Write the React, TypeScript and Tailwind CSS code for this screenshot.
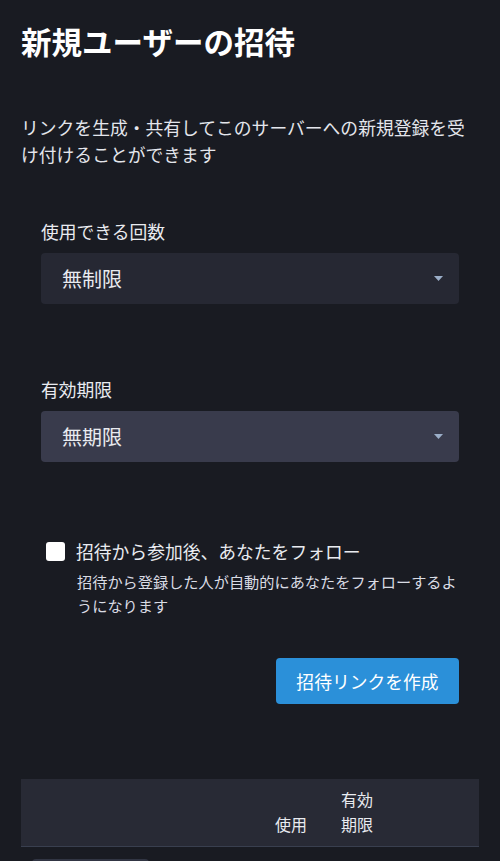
import React from "react";

const font = { fontFamily: '"Noto Sans CJK JP", "Noto Sans", sans-serif' };

function Caret() {
  return (
    <svg width="9" height="5" viewBox="0 0 9 5" className="shrink-0">
      <path d="M0 0 L9 0 L4.5 5 Z" fill="#9baec8" />
    </svg>
  );
}

function SelectField({ label, value, top, bg }: { label: string; value: string; top: string; bg: string }) {
  return (
    <div className={top}>
      <div className="text-[17.8px] leading-[26px] text-[#e9ebf0]">{label}</div>
      <div className={`mt-[9px] flex h-[51px] items-center justify-between rounded-[4px] pl-[21px] pr-[16px] ${bg}`}>
        <span className="text-[20px] text-[#e9ebf0]">{value}</span>
        <Caret />
      </div>
    </div>
  );
}

export default function App() {
  return (
    <div style={font} className="min-h-[861px] w-[500px] overflow-hidden bg-[#191b22] text-white">
      <div className="px-[21px] pt-[21px]">
        <h1 className="text-[30.5px] font-bold leading-[40px] text-white">新規ユーザーの招待</h1>
        <p className="mt-[53px] text-[17.8px] leading-[27px] text-[#e4e6ec]">
          リンクを生成・共有してこのサーバーへの新規登録を受け付けることができます
        </p>

        <div className="px-[20px]">
          <SelectField label="使用できる回数" value="無制限" top="mt-[50px]" bg="bg-[#262833]" />
          <SelectField label="有効期限" value="無期限" top="mt-[72px]" bg="bg-[#393b4c]" />

          <div className="mt-[76px] flex items-center gap-[11px] pl-[5px]">
            <span className="h-[19px] w-[19px] rounded-[3px] bg-white" />
            <span className="text-[17.8px] leading-[26px] text-[#e9ebf0]">招待から参加後、あなたをフォロー</span>
          </div>
          <p className="mt-[5px] pl-[36px] text-[15.2px] leading-[24px] text-[#d9dce4]">
            招待から登録した人が自動的にあなたをフォローするようになります
          </p>

          <div className="mt-[41px] flex justify-end">
            <button className="h-[46px] w-[183px] rounded-[4px] bg-[#2b90d9] text-[17.8px] text-white">
              招待リンクを作成
            </button>
          </div>
        </div>

        <div className="mt-[75px] flex border-b border-[#393f4f] bg-[#282a35] text-[16px] leading-[25px] text-[#e9ebf0]">
          <div className="w-[246px]" />
          <div className="flex w-[66px] items-end px-[8px] pb-[9px] pt-[8px]">使用</div>
          <div className="w-[48px] px-[8px] pb-[9px] pt-[8px]">有効期限</div>
          <div className="flex-1" />
        </div>
        <div className="ml-[11px] mt-[12px] h-[30px] w-[117px] rounded-[4px] bg-[#313543]" />
      </div>
    </div>
  );
}
